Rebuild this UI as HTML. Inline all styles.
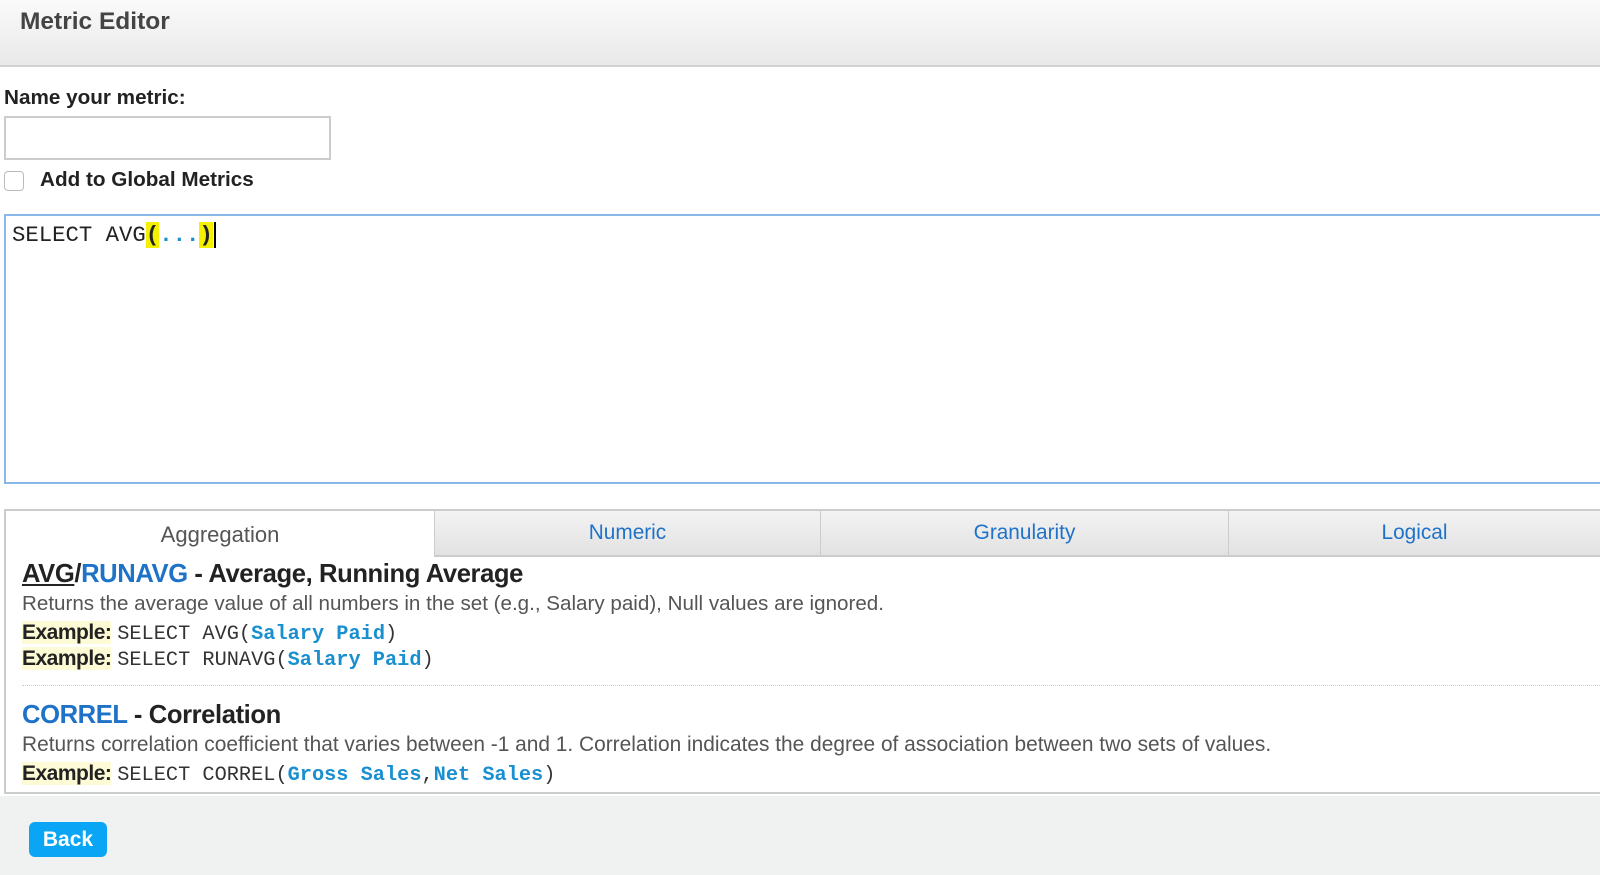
<!DOCTYPE html>
<html><head><meta charset="utf-8"><style>
*{margin:0;padding:0;box-sizing:border-box}
body{width:1600px;height:875px;overflow:hidden;background:#fff;font-family:"Liberation Sans",Arial,sans-serif;position:relative;color:#333}
.abs{position:absolute;white-space:nowrap}
#hdr{position:absolute;left:0;top:0;width:1600px;height:67px;background:linear-gradient(#fafafa,#e9e9e9);border-bottom:2px solid #d0d0d0}
.mono{font-family:"Liberation Mono","Courier New",monospace}
.b{color:#1a8fd0;font-weight:bold}
.ex{background:#fdfbd5;font-weight:bold;color:#222;letter-spacing:-0.5px}
.tab{position:absolute;top:509px;height:48px;background:linear-gradient(#f3f3f3,#e2e2e3);border-left:1px solid #ccc;border-bottom:2px solid #ccc;border-top:2px solid #ccc;color:#1e72c8;font-size:20.8px;text-align:center;line-height:44px}
</style></head><body>
<div id="hdr"></div>
<div class="abs" style="left:20px;top:8px;font-size:24.5px;font-weight:bold;color:#444">Metric Editor</div>
<div class="abs" style="left:4px;top:86px;font-size:20.7px;font-weight:bold;color:#222">Name your metric:</div>
<div class="abs" style="left:4px;top:116px;width:327px;height:44px;border:2px solid #ccc"></div>
<div class="abs" style="left:4px;top:171px;width:20px;height:20px;border:1px solid #bbb;border-radius:4px"></div>
<div class="abs" style="left:40px;top:168px;font-size:20.7px;font-weight:bold;color:#222">Add to Global Metrics</div>
<div class="abs" style="left:4px;top:214px;width:1600px;height:270px;border:2px solid #8ab8ea;background:#fff"></div>
<div class="abs mono" style="left:12px;top:222px;font-size:22.3px;color:#222">SELECT AVG<span style="background:#f4f000;font-weight:bold">(</span><span style="color:#1a8fd0;font-weight:bold">...</span><span style="background:#f4f000;font-weight:bold">)</span><span style="border-left:2px solid #000;margin-left:1px"></span></div>

<div class="abs" style="left:4px;top:509px;width:1600px;height:285px;border:2px solid #ccc;background:#fff"></div>
<div class="abs" style="left:6px;top:511px;width:428px;height:46px;text-align:center;line-height:48px;font-size:22px;color:#555">Aggregation</div>
<div class="tab" style="left:434px;width:386px">Numeric</div>
<div class="tab" style="left:820px;width:408px">Granularity</div>
<div class="tab" style="left:1228px;width:372px">Logical</div>

<div class="abs" style="left:22px;top:560px;font-size:25.6px;font-weight:bold;color:#222;letter-spacing:-0.4px"><span style="text-decoration:underline">AVG</span>/<span style="color:#1e72c8">RUNAVG</span> - Average, Running Average</div>
<div class="abs" style="left:22px;top:592px;font-size:20.6px;color:#555">Returns the average value of all numbers in the set (e.g., Salary paid), Null values are ignored.</div>
<div class="abs" style="left:22px;top:621px;font-size:21px"><span class="ex">Example:</span> <span class="mono" style="font-size:20.3px">SELECT AVG(<span class="b">Salary Paid</span>)</span></div>
<div class="abs" style="left:22px;top:647px;font-size:21px"><span class="ex">Example:</span> <span class="mono" style="font-size:20.3px">SELECT RUNAVG(<span class="b">Salary Paid</span>)</span></div>
<div class="abs" style="left:22px;top:685px;width:1578px;border-top:1px dotted #ccc"></div>
<div class="abs" style="left:22px;top:701px;font-size:25.6px;font-weight:bold;color:#222;letter-spacing:-0.4px"><span style="color:#1e72c8">CORREL</span> - Correlation</div>
<div class="abs" style="left:22px;top:733px;font-size:20.9px;color:#555">Returns correlation coefficient that varies between -1 and 1. Correlation indicates the degree of association between two sets of values.</div>
<div class="abs" style="left:22px;top:762px;font-size:21px"><span class="ex">Example:</span> <span class="mono" style="font-size:20.3px">SELECT CORREL(<span class="b">Gross Sales</span>,<span class="b">Net Sales</span>)</span></div>

<div class="abs" style="left:0;top:796px;width:1600px;height:79px;background:#f0f1f1"></div>
<div class="abs" style="left:29px;top:822px;width:78px;height:35px;background:#0ba5f6;border-radius:6px;color:#fff;font-weight:bold;font-size:21px;text-align:center;line-height:35px">Back</div>
</body></html>
